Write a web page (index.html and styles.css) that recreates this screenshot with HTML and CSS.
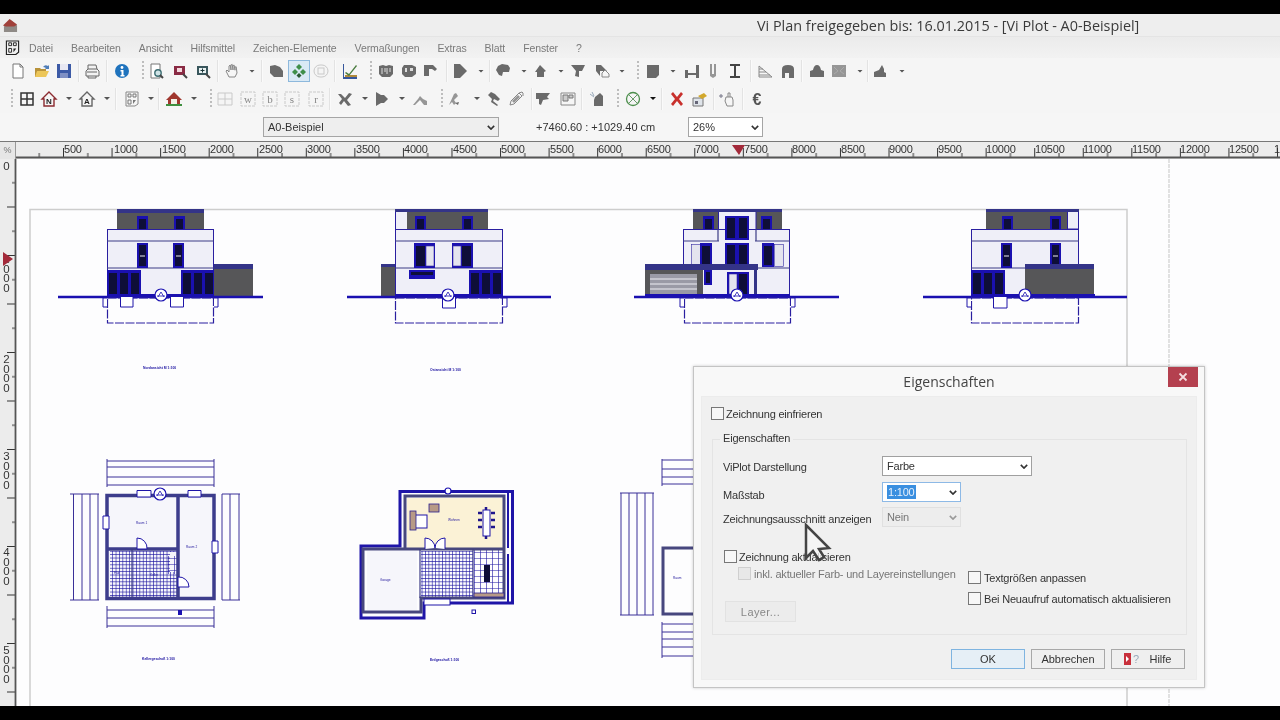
FILE: index.html
```html
<!DOCTYPE html>
<html lang="de">
<head>
<meta charset="utf-8">
<title>Vi Plan</title>
<link rel="stylesheet" href="styles.css">
</head>
<body>
<svg class="defs" aria-hidden="true">
  <defs>
    <g id="doc"><path class="pg" d="M3 1h7l3 3v11H3z"/><path class="pgl" d="M10 1v3h3"/></g>
    <g id="open"><path d="M1 14V5h5l1 1h5v8z" fill="#b8923a"/><path d="M3 8h12l-3 6H1z" fill="#ecc659"/><path d="M9 4q2-3 5-1l1-1v4h-4l1-1q-2-1-3-1z" fill="#4f7db8"/></g>
    <g id="save"><path d="M1 1h14v14H1z" fill="#3c5aa6"/><path d="M4 1h8v6H4z" fill="#e8e8f2"/><path d="M4 10h8v5H4z" fill="#7f90c4"/></g>
    <g id="print"><path class="ol" d="M4 6V2h8l1 4M2 13V8l2-2h9l2 2v5zM4 13v2h8v-2M3 9h10"/></g>
    <g id="info"><circle cx="8" cy="8" r="7" fill="#1f73bd"/><circle cx="8" cy="4.5" r="1.4" fill="#fff"/><path d="M6.5 7h3v5h1v1.4h-4V12h1V8.400h-1z" fill="#fff"/></g>
    <g id="prev"><path class="pg" d="M2 1h9v14H2z"/><circle cx="9" cy="10" r="3.200" fill="#cfe3e6" stroke="#3c6d72" stroke-width="1.400"/><path class="dk2" d="M11 12l3 3"/></g>
    <g id="zr"><path d="M2 3h11v9H2z" fill="#8a2b44"/><path d="M5 5h5v4H5z" fill="#f3d8dd"/><path class="dk2" d="M11 11l4 4"/></g>
    <g id="zp"><path d="M2 3h11v9H2z" fill="#39565c"/><path d="M4 5h7v5H4z" fill="#e8f1f2"/><path d="M7.500 5.500v4M5.500 7.500h4" stroke="#1a3438" fill="none"/><path class="dk2" d="M11 11l4 4"/></g>
    <g id="hand"><path class="olf" d="M5 14L2 8l1-1 2 2V3l1.200-1L7 7V2l1.200-.6L9 7V2.500l1.200-.3.800 5V4l1.200-.2L13 10l-2 4z"/></g>
    <g id="blob"><path class="gr" d="M2 3l5-1 5 2 3 4v6H6l-4-4z"/></g>
    <g id="act"><path d="M8 1l3 3-3 3-3-3z" fill="#3f8f4a"/><path d="M4 6l3 3-3 3-3-3z" fill="#3f8f4a"/><path d="M12 6l3 3-3 3-3-3z" fill="#3f8f4a"/><path d="M8 10l2.500 2.500L8 15l-2.500-2.500z" fill="#2b5a34"/></g>
    <g id="ghost"><rect class="fa" x="1" y="2" width="14" height="12" rx="6"/><rect class="fa" x="5" y="5" width="6" height="6"/></g>
    <g id="chart"><path d="M2 1v13h13v2H1V1z" fill="#37579c"/><path d="M3 12h12v2H3z" fill="#b08a3c"/><path d="M4 9l3 2 7-9 1 1-8 10-4-3z" fill="#4a7c3f"/></g>
    <g id="rf1"><path class="gr" d="M1 3l4-1 3 1 3-1 4 1v8l-3 3H4l-3-3z"/><path d="M4 5v6M7 5v4M9 5v6M12 5v4" stroke="#ddd" fill="none"/></g>
    <g id="rf2"><path class="gr" d="M3 2h8l4 2v7l-4 3H4l-3-3V5z"/><path d="M4 5h2v4H4zM9 5h3v3H9z" fill="#ddd"/></g>
    <g id="rf3"><path class="gr" d="M2 2h9l4 4-2 2-3-2H7v7H2z"/></g>
    <g id="wedge"><path class="gr" d="M2 1h6l7 7-7 7H2z"/></g>
    <g id="helm"><path class="gr" d="M3 3l4-2 6 1 2 3-1 4H8l-1 4-3-1-3-5z"/></g>
    <g id="hut"><path class="gr" d="M8 2l6 6-2 1v5H5V9H3z"/></g>
    <g id="wing"><path class="gr" d="M1 2h14l-3 6H9v6l-4-1 1-5z"/></g>
    <g id="mix"><path class="gr" d="M2 8V2h5l6 6H6v5z"/><path class="olf" d="M8 10l3-3 4 4v3H8z"/></g>
    <g id="sq"><path class="gr" d="M2 2h12v10l-3 3H2z"/></g>
    <g id="tee"><path class="gr" d="M1 7h3v3h8V2h3v13h-3v-3H4v3H1z"/></g>
    <g id="uu"><path class="gm" d="M5 1h2v10h2V1h2v12l-3 2-3-2z"/></g>
    <g id="ibar"><path class="dk2" d="M3 2h10M3 14h10M8 2v12"/></g>
    <g id="ramp"><path class="olf" d="M2 14h13L2 3zM2 6h4M2 9h7M2 12h11"/></g>
    <g id="arch"><path class="gr" d="M2 15V6q0-4 6-4t6 4v9H9v-5H5v5z"/></g>
    <g id="dome"><path class="gr" d="M1 14V8l3-1q1-5 4-5t4 5l3 1v6z"/></g>
    <g id="boxx"><path class="gm" d="M1 2h14v12H1z"/><path d="M3 4l4 4-4 3M13 4l-4 4 4 3" stroke="#aaa" fill="none"/></g>
    <g id="peak"><path class="gr" d="M2 14V9l5-2 3-5 2 4v3l2 1v4z"/></g>
    <g id="cross"><path class="dk3" d="M2 2h12v12H2zM8 2v12M2 8h12"/></g>
    <g id="hn"><path d="M8 1L1 8h2v7h10V8h2z" fill="none" stroke="#8c2b30" stroke-width="1.400"/><text class="ict" x="8" y="13" text-anchor="middle">N</text></g>
    <g id="ha"><path d="M8 1L1 8h2v7h10V8h2z" fill="none" stroke="#666" stroke-width="1.400"/><text class="ict" x="8" y="13" text-anchor="middle">A</text></g>
    <g id="fp"><path class="olf" d="M2 1h12v12l-3 2H2z"/><path d="M4 3h3v3H4zM9 3h3v3H9zM4 9h3v4H4z" fill="none" stroke="#777"/><path d="M9 9h3l-3 4z" fill="#777"/></g>
    <g id="fpd"><path class="dkl" d="M1.500 1h13v12l-3 2.500H1.500z"/><path d="M4 3h3v3H4zM9 3h3v3H9zM4 9h3v4H4z" fill="none" stroke="#222"/><path d="M9 9h3l-3 4z" fill="#222"/></g>
    <g id="hg"><path d="M8 1L0 9h2v4h12V9h2z" fill="#a0372e"/><path d="M5 8h6v5H5z" fill="#f3f1e6"/><path d="M0 13h16v2H0z" fill="#3f8f3f"/></g>
    <g id="fc"><path class="fa" d="M1 2h14v12H1zM8 2v12M1 8h14"/></g>
    <g id="lw"><rect class="fa dsh" x="1" y="1" width="14" height="14"/><text class="icl" x="8" y="12" text-anchor="middle">w</text></g>
    <g id="lb"><rect class="fa dsh" x="1" y="1" width="14" height="14"/><text class="icl" x="8" y="12" text-anchor="middle">b</text></g>
    <g id="ls"><rect class="fa dsh" x="1" y="1" width="14" height="14"/><text class="icl" x="8" y="12" text-anchor="middle">s</text></g>
    <g id="lr"><rect class="fa dsh" x="1" y="1" width="14" height="14"/><text class="icl" x="8" y="12" text-anchor="middle">r</text></g>
    <g id="ham"><path class="gr" d="M1 3h3l4 4 4-5 3 1-5 6 4 5-3 1-4-5-3 4-2-2 3-4z"/></g>
    <g id="wd"><path class="gr" d="M3 1l5 3h3l4 4-4 4H8l-5 3z"/></g>
    <g id="mnd"><path class="gm" d="M1 14l5-6 2-3 3 3 4 2v4z"/><path d="M3 14l5-5 4 5" fill="#f8f8f8"/></g>
    <g id="pick"><path class="gm" d="M2 14L7 3l2-1 2 3-4 4 2 3-2 2-2-3z"/><path d="M11 14l-3-2 4-1z" class="gr"/></g>
    <g id="tool"><path class="gr" d="M2 4l3-3 4 2 5 5-2 2-4-2-1 2 5 4-1 1-6-4 1-3z"/></g>
    <g id="pen"><path class="olf" d="M2 14l1-4 8-8 3 3-8 8zM11 2l3-1 1 1v3"/><path class="gm" d="M4 10l6-6 2 2-6 6z"/></g>
    <g id="flag"><path class="gr" d="M1 2h14l-3 4 2 2-6 1-2 5-2-1V8H1z"/></g>
    <g id="fr"><path class="olf" d="M1 2h14v12H1z"/><path d="M3 4h5v6H3zM9 4h4v3H9z" fill="#ccc" stroke="#777"/></g>
    <g id="sph"><path class="gr" d="M6 6l5-4 3 3v10H5V9z"/><path d="M1 3l4 3M3 1l2 4" stroke="#9ab" fill="none"/></g>
    <g id="ok"><circle cx="8" cy="8" r="6.500" fill="none" stroke="#4d8f4d" stroke-width="1.300"/><path d="M4 4l8 8M12 4l-8 8" stroke="#6a9a6a" fill="none"/></g>
    <g id="xx"><path d="M2 3l2-2 4 5 4-5 2 2-4 5 4 5-2 2-4-5-4 5-2-2 4-5z" fill="#c8302c"/></g>
    <g id="hat"><path d="M1 7h10v8H1z" fill="#dfe4ea" stroke="#777"/><path d="M6 5l6-3 3 3-5 3z" fill="#d2a82c"/><path d="M3 10h3v3H3z" fill="#667"/></g>
    <g id="spk"><path class="olf" d="M6 6h6l1 3v6H7l-2-5zM8 6V2h2v4"/><path d="M1 3v4M-1 5h4" stroke="#778" fill="none"/></g>
    <g id="eu"><text class="ice" x="8" y="13.500" text-anchor="middle">€</text></g>
  </defs>
</svg>

<div class="app">
  <header class="titlebar">
    <svg class="appicon" viewBox="0 0 16 16"><path d="M1 9l7-7 7 6v7H1z" fill="#8f8a86"/><path d="M0 8l7-7 8 6-3 2H3z" fill="#a0403a"/></svg>
    <span class="title">Vi Plan freigegeben bis: 16.01.2015 - [Vi Plot - A0-Beispiel]</span>
  </header>

  <nav class="menubar">
    <svg class="menuicon" viewBox="0 0 16 16"><use href="#fpd"/></svg>
    <span>Datei</span><span>Bearbeiten</span><span>Ansicht</span><span>Hilfsmittel</span><span>Zeichen-Elemente</span><span>Vermaßungen</span><span>Extras</span><span>Blatt</span><span>Fenster</span><span>?</span>
  </nav>

  <div class="toolbar tb1">
    <svg class="ic" viewBox="0 0 16 16"><use href="#doc"/></svg>
    <svg class="ic m8" viewBox="0 0 16 16"><use href="#open"/></svg>
    <svg class="ic m6" viewBox="0 0 16 16"><use href="#save"/></svg>
    <i class="sep m6"></i>
    <svg class="ic m4" viewBox="0 0 16 16"><use href="#print"/></svg>
    <i class="sep m6"></i>
    <svg class="ic m6" viewBox="0 0 16 16"><use href="#info"/></svg>
    <i class="grip m12"></i>
    <svg class="ic m5" viewBox="0 0 16 16"><use href="#prev"/></svg>
    <svg class="ic m7" viewBox="0 0 16 16"><use href="#zr"/></svg>
    <svg class="ic m7" viewBox="0 0 16 16"><use href="#zp"/></svg>
    <i class="sep m6"></i>
    <svg class="ic m5" viewBox="0 0 16 16"><use href="#hand"/></svg>
    <i class="ar m9"></i>
    <i class="sep m6"></i>
    <svg class="ic m5" viewBox="0 0 16 16"><use href="#blob"/></svg>
    <svg class="ic act m4" viewBox="0 0 16 16"><use href="#act"/></svg>
    <svg class="ic m3" viewBox="0 0 16 16"><use href="#ghost"/></svg>
    <i class="sep m5"></i>
    <svg class="ic m6" viewBox="0 0 16 16"><use href="#chart"/></svg>
    <i class="grip m12"></i>
    <svg class="ic m6" viewBox="0 0 16 16"><use href="#rf1"/></svg>
    <svg class="ic m7" viewBox="0 0 16 16"><use href="#rf2"/></svg>
    <svg class="ic m5" viewBox="0 0 16 16"><use href="#rf3"/></svg>
    <i class="sep m8"></i>
    <svg class="ic m4" viewBox="0 0 16 16"><use href="#wedge"/></svg>
    <i class="ar m10"></i>
    <i class="sep m5"></i>
    <svg class="ic m4" viewBox="0 0 16 16"><use href="#helm"/></svg>
    <i class="ar m10"></i>
    <svg class="ic m5" viewBox="0 0 16 16"><use href="#hut"/></svg>
    <i class="ar m10"></i>
    <svg class="ic m6" viewBox="0 0 16 16"><use href="#wing"/></svg>
    <svg class="ic m8" viewBox="0 0 16 16"><use href="#mix"/></svg>
    <i class="ar m9"></i>
    <i class="grip m12"></i>
    <svg class="ic m6" viewBox="0 0 16 16"><use href="#sq"/></svg>
    <i class="ar m9"></i>
    <svg class="ic m8" viewBox="0 0 16 16"><use href="#tee"/></svg>
    <svg class="ic m5" viewBox="0 0 16 16"><use href="#uu"/></svg>
    <svg class="ic m6" viewBox="0 0 16 16"><use href="#ibar"/></svg>
    <i class="sep m7"></i>
    <svg class="ic m5" viewBox="0 0 16 16"><use href="#ramp"/></svg>
    <svg class="ic m7" viewBox="0 0 16 16"><use href="#arch"/></svg>
    <i class="sep m5"></i>
    <svg class="ic m6" viewBox="0 0 16 16"><use href="#dome"/></svg>
    <svg class="ic m6" viewBox="0 0 16 16"><use href="#boxx"/></svg>
    <i class="ar m10"></i>
    <i class="sep m4"></i>
    <svg class="ic m3" viewBox="0 0 16 16"><use href="#peak"/></svg>
    <i class="ar m11"></i>
  </div>

  <div class="toolbar tb2">
    <i class="grip m1"></i>
    <svg class="ic m6" viewBox="0 0 16 16"><use href="#cross"/></svg>
    <svg class="ic m6" viewBox="0 0 16 16"><use href="#hn"/></svg>
    <i class="ar m9"></i>
    <svg class="ic m7" viewBox="0 0 16 16"><use href="#ha"/></svg>
    <i class="ar m9"></i>
    <i class="sep m5"></i>
    <svg class="ic m7" viewBox="0 0 16 16"><use href="#fp"/></svg>
    <i class="ar m8"></i>
    <i class="sep m4"></i>
    <svg class="ic m6" viewBox="0 0 16 16"><use href="#hg"/></svg>
    <i class="ar m9"></i>
    <i class="grip m13"></i>
    <svg class="ic m5" viewBox="0 0 16 16"><use href="#fc"/></svg>
    <svg class="ic m7" viewBox="0 0 16 16"><use href="#lw"/></svg>
    <svg class="ic m6" viewBox="0 0 16 16"><use href="#lb"/></svg>
    <svg class="ic m6" viewBox="0 0 16 16"><use href="#ls"/></svg>
    <svg class="ic m8" viewBox="0 0 16 16"><use href="#lr"/></svg>
    <i class="sep m5"></i>
    <svg class="ic m6" viewBox="0 0 16 16"><use href="#ham"/></svg>
    <i class="ar m9"></i>
    <svg class="ic m5" viewBox="0 0 16 16"><use href="#wd"/></svg>
    <i class="ar m10"></i>
    <svg class="ic m7" viewBox="0 0 16 16"><use href="#mnd"/></svg>
    <i class="grip m13"></i>
    <svg class="ic m4" viewBox="0 0 16 16"><use href="#pick"/></svg>
    <i class="ar m11"></i>
    <svg class="ic m6" viewBox="0 0 16 16"><use href="#tool"/></svg>
    <svg class="ic m6" viewBox="0 0 16 16"><use href="#pen"/></svg>
    <i class="sep m7"></i>
    <svg class="ic m2" viewBox="0 0 16 16"><use href="#flag"/></svg>
    <svg class="ic m9" viewBox="0 0 16 16"><use href="#fr"/></svg>
    <i class="sep m5"></i>
    <svg class="ic m6" viewBox="0 0 16 16"><use href="#sph"/></svg>
    <i class="grip m12"></i>
    <svg class="ic m6" viewBox="0 0 16 16"><use href="#ok"/></svg>
    <i class="ar m9 ardk"></i>
    <i class="sep m5"></i>
    <svg class="ic m6" viewBox="0 0 16 16"><use href="#xx"/></svg>
    <svg class="ic m7" viewBox="0 0 16 16"><use href="#hat"/></svg>
    <i class="sep m5"></i>
    <svg class="ic m5" viewBox="0 0 16 16"><use href="#spk"/></svg>
    <i class="sep m6"></i>
    <svg class="ic m5" viewBox="0 0 16 16"><use href="#eu"/></svg>
  </div>

  <div class="statusrow">
    <div class="combo sheetcombo"><span>A0-Beispiel</span><svg class="chev" viewBox="0 0 10 6"><path d="M1 1l4 4 4-4"/></svg></div>
    <span class="coords">+7460.60 : +1029.40 cm</span>
    <div class="combo zoomcombo"><span>26%</span><svg class="chev" viewBox="0 0 10 6"><path d="M1 1l4 4 4-4"/></svg></div>
  </div>

  <div class="hruler">
    <div class="corner">%</div>
    <svg class="hr" viewBox="16 141 1264 18">
      <defs>
        <pattern id="htick" patternUnits="userSpaceOnUse" x="63" y="141" width="48.56" height="18">
          <path class="tk" d="M.5 7v10M24.800 12v5"/>
        </pattern>
      </defs>
      <rect x="16" y="141" width="1264" height="18" fill="url(#htick)"/>
      <path class="rl" d="M16 157.500h1264"/>
      <text class="rt" x="64" y="153">500</text><text class="rt" x="114" y="153">1000</text><text class="rt" x="162" y="153">1500</text><text class="rt" x="210" y="153">2000</text><text class="rt" x="259" y="153">2500</text><text class="rt" x="307" y="153">3000</text><text class="rt" x="356" y="153">3500</text><text class="rt" x="404" y="153">4000</text><text class="rt" x="453" y="153">4500</text><text class="rt" x="501" y="153">5000</text><text class="rt" x="550" y="153">5500</text><text class="rt" x="598" y="153">6000</text><text class="rt" x="647" y="153">6500</text><text class="rt" x="695" y="153">7000</text><text class="rt" x="744" y="153">7500</text><text class="rt" x="792" y="153">8000</text><text class="rt" x="841" y="153">8500</text><text class="rt" x="889" y="153">9000</text><text class="rt" x="938" y="153">9500</text><text class="rt" x="986" y="153">10000</text><text class="rt" x="1035" y="153">10500</text><text class="rt" x="1083" y="153">11000</text><text class="rt" x="1132" y="153">11500</text><text class="rt" x="1180" y="153">12000</text><text class="rt" x="1229" y="153">12500</text><text class="rt" x="1274" y="153">1</text>
      <path class="marker" d="M732 145h13l-6 10z"/>
    </svg>
  </div>

  <main class="workspace">
    <svg class="vr" viewBox="0 159 17 547">
      <defs>
        <pattern id="vtick" patternUnits="userSpaceOnUse" x="0" y="158" width="17" height="48.5">
          <path class="tk" d="M7 .5h8M12 24.700h3"/>
        </pattern>
      </defs>
      <rect x="0" y="159" width="15" height="547" fill="url(#vtick)"/>
      <path class="rl" d="M15.500 159v547"/>
      <text class="vt" x="6.500" y="160">0</text>
      <text class="vt" x="6.500" y="253">1000</text>
      <text class="vt" x="6.500" y="353">2000</text>
      <text class="vt" x="6.500" y="450">3000</text>
      <text class="vt" x="6.500" y="546">4000</text>
      <text class="vt" x="6.500" y="644">5000</text>
      <path class="marker" d="M3 252l10 7-10 7z"/>
    </svg>

    <svg class="sheet" viewBox="17 159 1263 547">
      <defs>
        <pattern id="tile" patternUnits="userSpaceOnUse" width="3.400" height="3.400">
          <path d="M0 0h3.400M0 0v3.400" stroke="#1c14a0" stroke-width="1.200" fill="none"/>
        </pattern>
        <pattern id="tile2" patternUnits="userSpaceOnUse" width="6" height="6">
          <path d="M0 0h6M0 0v6" stroke="#1c14a0" stroke-width="1.200" fill="none"/>
        </pattern>
        <g id="w1"><rect class="nv" width="11" height="13"/><rect class="bk" x="2" y="3" width="7" height="10"/></g>
        <g id="w2"><rect class="nv" width="11" height="25"/><rect class="bk" x="2" y="2" width="7" height="21"/><path class="st" d="M3 13h5"/></g>
        <g id="w3"><rect class="nv" width="34" height="27"/><rect class="bk" x="2" y="3" width="8" height="23"/><rect class="bk" x="13" y="3" width="8" height="23"/><rect class="bk" x="24" y="3" width="8" height="23"/></g>
        <g id="ci"><circle class="cir" r="6"/><path class="ln1" d="M-3 2L0-3l3 5M-4 1h8"/></g>
      </defs>

      <path class="paper" d="M30 706V209.500h1097V706"/>
      <path class="guide" d="M1169 159v547"/>

      <!-- Ansicht 1 -->
      <g>
        <rect class="dk" x="117" y="209" width="87" height="20"/><rect class="band" x="117" y="209" width="87" height="4"/>
        <use href="#w1" x="137" y="216"/><use href="#w1" x="174" y="216"/>
        <rect class="lt" x="107.500" y="229.500" width="106" height="67"/>
        <path class="ln" d="M107 241h107M107 268h107"/>
        <use href="#w2" x="137" y="243"/><use href="#w2" x="173" y="243"/>
        <use href="#w3" x="107" y="270"/><use href="#w3" x="181" y="270"/>
        <rect class="dk" x="214" y="264" width="39" height="33"/><rect class="band" x="214" y="264" width="39" height="5"/>
        <path class="gl" d="M58 297h205"/><path class="gl2" d="M107 296h107"/>
        <rect class="da" x="107.500" y="298" width="106" height="25"/>
        <path class="wh" d="M120.500 297v10h12.500v-10M170.500 297v10h13v-10M107 298h-4v9h4M214 298h4v9h-4"/>
        <use href="#ci" x="161" y="295"/>
        <text class="cap" x="143" y="368.500">Nordansicht M 1:100</text>
      </g>
      <!-- Ansicht 2 -->
      <g>
        <rect class="lt" x="395.500" y="209.500" width="12" height="20"/><rect class="dk" x="407" y="209" width="81" height="20"/><rect class="band" x="395" y="209" width="93" height="3"/>
        <use href="#w1" x="415" y="216"/><use href="#w1" x="462" y="216"/>
        <rect class="lt" x="395.500" y="229.500" width="107" height="67"/>
        <path class="ln" d="M395 241h108M395 268h108"/>
        <rect class="nv" x="414" y="243" width="21" height="25"/><rect class="bk" x="416" y="246" width="9" height="20"/><rect class="pn" x="426" y="246" width="8" height="20"/>
        <rect class="nv" x="452" y="243" width="21" height="25"/><rect class="bk" x="462" y="246" width="9" height="20"/><rect class="pn" x="453" y="246" width="8" height="20"/>
        <rect class="nv" x="409" y="270" width="26" height="9"/><rect class="bk" x="411" y="272" width="22" height="3"/>
        <use href="#w3" x="469" y="270"/>
        <rect class="dk" x="381" y="264" width="14" height="33"/><rect class="band" x="381" y="264" width="14" height="3"/>
        <path class="gl" d="M347 297h204"/><path class="gl2" d="M395 296h108"/>
        <rect class="da" x="395.500" y="298" width="107" height="25"/>
        <path class="wh" d="M442.500 297v11h13v-11M503 298h4v9h-4"/>
        <use href="#ci" x="448" y="295"/>
        <text class="cap" x="430" y="371">Ostansicht M 1:100</text>
      </g>
      <!-- Ansicht 3 -->
      <g>
        <rect class="dk" x="693" y="209" width="25" height="20"/><rect class="dk" x="756" y="209" width="26" height="20"/><rect class="lt" x="718.500" y="210.500" width="37.500" height="19"/><rect class="band" x="693" y="209" width="89" height="3"/>
        <use href="#w1" x="703" y="216"/><use href="#w1" x="761" y="216"/>
        <rect class="lt" x="683.500" y="229.500" width="106" height="67"/>
        <path class="ln" d="M683 241h36M755 241h35M757 268h33M718 229v12M756 229v12"/>
        <rect class="nv" x="725" y="216" width="12" height="24"/><rect class="bk" x="727" y="218" width="8" height="20"/><rect class="nv" x="737" y="216" width="12" height="24"/><rect class="bk" x="739" y="218" width="8" height="20"/>
        <rect class="nv" x="725" y="243" width="12" height="23"/><rect class="bk" x="727" y="245" width="8" height="19"/><rect class="nv" x="737" y="243" width="12" height="23"/><rect class="bk" x="739" y="245" width="8" height="19"/>
        <rect class="pn" x="691.500" y="244.500" width="9" height="22"/><rect class="nv" x="700" y="243" width="12" height="24"/><rect class="bk" x="702" y="246" width="8" height="19"/>
        <rect class="pn" x="774.500" y="244.500" width="9" height="22"/><rect class="nv" x="762" y="243" width="12" height="24"/><rect class="bk" x="764" y="246" width="8" height="19"/>
        <rect class="band" x="645" y="264" width="113" height="6"/>
        <rect class="dk" x="645" y="270" width="58" height="27"/>
        <rect class="dr" x="650" y="274" width="47" height="21"/>
        <path class="st" d="M650 279h47M650 284h47M650 289h47"/>
        <rect class="nv" x="704" y="270" width="8" height="15"/><rect class="bk" x="706" y="272" width="4" height="11"/>
        <rect class="nv" x="727" y="272" width="22" height="24"/><rect class="pn" x="729" y="274" width="8" height="20"/><rect class="bk" x="739" y="274" width="8" height="20"/>
        <rect class="band" x="754" y="270" width="3" height="27"/>
        <path class="gl" d="M634 297h205"/><path class="gl2" d="M645 296h145"/>
        <rect class="da" x="684.500" y="298" width="106" height="25"/>
        <path class="wh" d="M684 298h-4v9h4M791 298h4v9h-4"/>
        <use href="#ci" x="737" y="295"/>
      </g>
      <!-- Ansicht 4 -->
      <g>
        <rect class="dk" x="986" y="209" width="81" height="20"/><rect class="lt" x="1067.500" y="210" width="11" height="19"/><rect class="band" x="986" y="209" width="93" height="3"/>
        <use href="#w1" x="1002" y="216"/><use href="#w1" x="1050" y="216"/>
        <rect class="lt" x="971.500" y="229.500" width="107" height="67"/>
        <path class="ln" d="M971 241h108M971 268h54"/>
        <use href="#w2" x="1001" y="243"/><use href="#w2" x="1050" y="243"/>
        <use href="#w3" x="971" y="270"/>
        <rect class="dk" x="1025" y="264" width="69" height="32"/><rect class="band" x="1025" y="264" width="69" height="5"/>
        <path class="gl" d="M923 297h204"/><path class="gl2" d="M971 296h124"/>
        <rect class="da" x="971.500" y="298" width="107" height="25"/>
        <path class="wh" d="M993.500 297v11h13.500v-11M971 298h-4v9h4"/>
        <use href="#ci" x="1025" y="295"/>
      </g>

      <!-- Kellergeschoss -->
      <g>
        <path class="dim" d="M107 461h107M107 467h107M107 477h107M107 485h107M107 459v28M214 459v28"/>
        <path class="dim" d="M107 610h107M107 618h107M107 626h107M107 606v22M214 606v22"/>
        <path class="dim" d="M73.500 494v106M82 494v106M90 494v106M98 494v106M70 494h29M70 600h29"/>
        <path class="dim" d="M222 494v106M230 494v106M239 494v106M222 494h18M222 600h18"/>
        <rect class="lt2" x="108.500" y="496.500" width="104" height="102"/>
        <rect x="110" y="551" width="68" height="46" fill="url(#tile)"/>
        <rect class="lt2" x="170" y="552" width="8" height="20"/>
        <rect x="168" y="556" width="10" height="18" fill="url(#tile2)"/>
        <path class="wall" d="M107 495.500h107v103H107zM178 495v103M107 549h71"/>
        <path class="ln" d="M132 549v48"/>
        <path class="wh" d="M137 549v-11a10 10 0 0 1 10 11zM178 577v10h11a10 10 0 0 0-11-10z"/>
        <path class="wh" d="M137 490.500h14v6.500h-14zM188 490.500h13v6.500h-13zM103 516h6v13h-6zM212 541h6v12h-6z"/>
        <use href="#ci" x="160" y="494"/>
        <text class="rm" x="136" y="524">Raum 1</text><text class="rm" x="186" y="548">Raum 2</text><text class="rm" x="114" y="574">Flur</text>
        <text class="rm" x="150" y="576">Keller</text>
        <rect class="nv" x="178" y="610" width="4" height="5"/>
        <text class="cap" x="142" y="659.500">Kellergeschoß 1:100</text>
      </g>

      <!-- Erdgeschoss -->
      <g>
        <path class="wallb" d="M400 491.500h112.500V603H424v15H361V546h39z"/>
        <rect class="cream" x="407" y="498" width="98" height="51"/>
        <rect x="421" y="551" width="52" height="47" fill="url(#tile)"/>
        <rect x="474" y="549" width="31" height="49" fill="url(#tile2)"/>
        <rect class="lt2" x="367" y="551" width="50" height="59"/>
        <path class="wall2" d="M405 496h99v102h-83v14h-58v-63h42zM405 549h99"/>
        <path class="ln" d="M420 549v49M473 549v49"/>
        <path class="gl3" d="M508 491v57M508 554v50"/>
        <rect class="wh" x="424" y="599" width="26" height="6"/>
        <path class="wh" d="M425 549v-11a10 10 0 0 1 10 10M445 549v-11a10 10 0 0 0-10 10"/>
        <rect class="wh" x="413" y="515" width="14" height="13"/>
        <rect class="bru" x="410" y="511" width="6" height="19"/>
        <rect class="bru" x="429" y="504" width="10" height="8"/>
        <rect class="wh" x="483" y="510" width="7" height="26"/>
        <path class="tb" d="M478 513h4M478 520h4M478 527h4M491 513h4M491 520h4M491 527h4M486 507v3M486 536v3"/>
        <rect class="bk" x="484" y="565" width="6" height="17"/>
        <rect class="bru" x="474" y="593" width="30" height="4"/>
        <circle class="cir" cx="448" cy="491" r="3"/>
        <rect class="wh" x="472" y="610" width="3.500" height="3.500"/>
        <text class="rm" x="448" y="521">Wohnen</text><text class="rm" x="380" y="581">Garage</text>
        <text class="cap" x="430" y="660.500">Erdgeschoß 1:100</text>
      </g>

      <!-- Obergeschoss -->
      <g>
        <path class="dim" d="M662 460h31M662 469h31M662 477h31M662 484h31M662 459v27"/>
        <path class="dim" d="M621 493v122M629 493v122M637 493v122M645 493v122M653 493v122M620 493h34M620 615h34"/>
        <path class="dim" d="M662 624h31M662 632h31M662 639h31M662 647h31M662 656h31M662 622v36"/>
        <path class="wall2" d="M693 548h-30v66h30"/>
        <text class="rm" x="673" y="579">Raum</text>
      </g>
    </svg>
  </main>
</div>

<section class="dialog">
  <div class="dlg-head">
    <span class="dlg-title">Eigenschaften</span>
    <button class="dlg-close"><svg viewBox="0 0 10 10"><path d="M1.500 1.500l7 7M8.500 1.500l-7 7"/></svg></button>
  </div>
  <div class="dlg-body">
    <label class="chk first"><i class="box"></i><span>Zeichnung einfrieren</span></label>
    <div class="group">
      <div class="legend">Eigenschaften</div>
      <div class="row r1"><span class="lbl">ViPlot Darstellung</span><div class="sel w150"><span>Farbe</span><svg class="chev" viewBox="0 0 10 6"><path d="M1 1l4 4 4-4"/></svg></div></div>
      <div class="row r2"><span class="lbl">Maßstab</span><div class="sel w79 focus"><span class="picked">1:100</span><svg class="chev" viewBox="0 0 10 6"><path d="M1 1l4 4 4-4"/></svg></div></div>
      <div class="row r3"><span class="lbl">Zeichnungsausschnitt anzeigen</span><div class="sel w79 off"><span>Nein</span><svg class="chev" viewBox="0 0 10 6"><path d="M1 1l4 4 4-4"/></svg></div></div>
      <div class="lower">
        <div class="lower-l">
          <label class="chk"><i class="box"></i><span>Zeichnung aktualisieren</span></label>
          <label class="chk sub off"><i class="box"></i><span>inkl. aktueller Farb- und Layereinstellungen</span></label>
          <button class="btn layer">Layer...</button>
        </div>
        <div class="lower-r">
          <label class="chk"><i class="box"></i><span>Textgrößen anpassen</span></label>
          <label class="chk"><i class="box"></i><span>Bei Neuaufruf automatisch aktualisieren</span></label>
        </div>
      </div>
    </div>
    <div class="dlg-foot">
      <button class="btn def">OK</button>
      <button class="btn">Abbrechen</button>
      <button class="btn help"><svg viewBox="0 0 16 14"><path d="M0 1h7v12H0z" fill="#c8303c"/><path d="M2 4l3 3-3 3z" fill="#fff"/><text class="q" x="9" y="11">?</text></svg><span>Hilfe</span></button>
    </div>
  </div>
</section>

<svg class="cursor" viewBox="0 0 32 40"><path d="M3 3v33l7-7 6 9 5-3-5-8 10-1z"/></svg>
</body>
</html>
```

FILE: styles.css
```css
* { box-sizing: border-box; }
html, body { margin: 0; height: 720px; overflow: hidden; background: #000; }
body { position: relative; font-family: "Liberation Sans", Arial, sans-serif; filter: blur(.5px); }
.defs { position: absolute; width: 0; height: 0; }

.app { margin-top: 14px; height: 692px; display: flex; flex-direction: column; background: #f6f6f6; overflow: hidden; }

/* title + menu */
.titlebar { height: 22px; flex: none; display: flex; align-items: center; background: #eeeeee; padding-left: 3px; }
.appicon { width: 15px; height: 15px; flex: none; }
.title { margin-left: 739px; font: 14.4px "Open Sans", sans-serif; color: #3a3a3a; white-space: nowrap; }
.menubar { height: 22px; flex: none; display: flex; align-items: center; gap: 18px; background: linear-gradient(#ebebeb, #f2f2f2); font-size: 10.500px; letter-spacing: -.1px; color: #7a7a7a; padding-left: 5px; border-top: 1px solid #e4e4e4; }
.menuicon { width: 15px; height: 15px; margin-right: -9px; flex: none; }

/* toolbars */
.toolbar { display: flex; align-items: center; padding-left: 10px; flex: none; background: #f5f5f5; }
.tb1 { height: 26px; }
.tb2 { height: 29px; }
.ic { width: 16px; height: 16px; flex: none; overflow: visible; }
.act { width: 22px; height: 22px; padding: 2px; border: 1px solid #8db8dc; background: #d9e9f5; box-sizing: border-box; }
.sep { width: 2px; height: 22px; flex: none; background: #e3e3e3; border-right: 1px solid #fafafa; }
.grip { width: 2px; height: 20px; flex: none; background-image: linear-gradient(#bdbdbd 50%, transparent 50%); background-size: 2px 4px; }
.ar { width: 6px; height: 3px; flex: none; background: #555; clip-path: polygon(0 0, 100% 0, 50% 100%); }
.ardk { background: #111; }

.m1 { margin-left: 1px; } .m2 { margin-left: 2px; } .m3 { margin-left: 3px; } .m4 { margin-left: 4px; }
.m5 { margin-left: 5px; } .m6 { margin-left: 6px; } .m7 { margin-left: 7px; } .m8 { margin-left: 8px; }
.m9 { margin-left: 9px; } .m10 { margin-left: 10px; } .m11 { margin-left: 11px; } .m12 { margin-left: 12px; }
.m13 { margin-left: 13px; }

/* icon parts */
.pg { fill: #fff; stroke: #777; }
.pgl { fill: none; stroke: #777; }
.ol { fill: #f2f2f2; stroke: #666; stroke-width: 1; }
.olf { fill: #f6f6f6; stroke: #888; stroke-width: 1; }
.dkl { fill: #f0f0f0; stroke: #222; stroke-width: 1.200; }
.gr { fill: #6a6a6a; }
.gm { fill: #969696; }
.fa { fill: none; stroke: #c9c9c9; }
.dsh { stroke-dasharray: 3 1; }
.dk2 { fill: none; stroke: #444; stroke-width: 2; }
.dk3 { fill: none; stroke: #333; stroke-width: 1.500; }
.ict { font: bold 8px "Liberation Sans", sans-serif; fill: #222; }
.icl { font: 11px "Liberation Serif", serif; fill: #888; }
.ice { font: bold 16px "Liberation Sans", sans-serif; fill: #555; }

/* status row */
.statusrow { height: 28px; flex: none; display: flex; align-items: center; padding-left: 263px; background: #f6f6f6; font-size: 11px; color: #333; }
.combo { height: 20px; display: flex; align-items: center; justify-content: space-between; padding: 0 3px 0 4px; border: 1px solid #a5a5a5; flex: none; }
.sheetcombo { width: 236px; background: #eeeeee; }
.zoomcombo { width: 75px; background: #fff; margin-left: 32px; }
.coords { margin-left: 37px; width: 120px; white-space: nowrap; }
.chev { width: 8px; height: 5px; fill: none; stroke: #333; stroke-width: 2; flex: none; }

/* rulers */
.hruler { height: 18px; flex: none; display: flex; background: #ececec; border-top: 1px solid #777; }
.corner { width: 16px; flex: none; font-size: 9px; color: #777; text-align: center; line-height: 16px; background: #e6e6e6; border-right: 1px solid #999; }
.hr { width: 1264px; height: 18px; flex: none; margin-top: -1px; }
.tk { stroke: #333; stroke-width: 1; fill: none; }
.rl { stroke: #555; stroke-width: 1.800; fill: none; }
.rt { font: 11px "Liberation Sans", sans-serif; fill: #333; letter-spacing: -.2px; }
.marker { fill: #a32a3a; }
.workspace { flex: 1; display: flex; min-height: 0; background: #fdfdfe; }
.vr { width: 17px; height: 547px; flex: none; background: linear-gradient(90deg, #ececec 15px, #fdfdfe 15px); }
.vt { font: 11.500px "Liberation Sans", sans-serif; fill: #333; writing-mode: vertical-rl; text-orientation: upright; letter-spacing: -2.400px; }
.sheet { width: 1263px; height: 547px; flex: none; }

/* drawing */
.paper { fill: none; stroke: #cdcdcd; stroke-width: 1.500; }
.guide { fill: none; stroke: #c5c5c5; stroke-dasharray: 4 1; }
.dk { fill: #565658; }
.band { fill: #343488; }
.nv { fill: #1a10b0; }
.bk { fill: #0e0e38; }
.lt { fill: #efeff8; stroke: #2a1fa0; stroke-width: 1; }
.lt2 { fill: #f6f6fb; }
.pn { fill: #e4e4ee; stroke: #3328a0; stroke-width: .6; }
.dr { fill: #9a9aa6; }
.st { fill: none; stroke: #eeeef4; stroke-width: 1; }
.ln { fill: none; stroke: #3c3c86; stroke-width: 1.200; }
.ln1 { fill: none; stroke: #1a10b0; stroke-width: .8; }
.gl { fill: none; stroke: #1a10b0; stroke-width: 2.600; }
.gl2 { fill: none; stroke: #1a10b0; stroke-width: 4; }
.gl3 { fill: none; stroke: #1f15a8; stroke-width: 2; }
.da { fill: none; stroke: #2a1fa0; stroke-width: 1.200; stroke-dasharray: 9 1.500; }
.wh { fill: #fff; stroke: #1f15a8; stroke-width: 1; }
.cir { fill: #fff; stroke: #1a10b0; stroke-width: 1.200; }
.cap { font: bold 3.400px "Liberation Sans", sans-serif; fill: #1a10a0; }
.rm { font: 3.200px "Liberation Sans", sans-serif; fill: #2a20a0; }
.dim { fill: none; stroke: #3a3098; stroke-width: 1; }
.wall { fill: none; stroke: #3d3d8c; stroke-width: 3.500; }
.wallb { fill: none; stroke: #1f15a8; stroke-width: 3; }
.wall2 { fill: none; stroke: #47477e; stroke-width: 3; }
.cream { fill: #fbf2d6; }
.bru { fill: #b79a86; stroke: #2a1f90; stroke-width: .8; }
.tb { fill: none; stroke: #1f158c; stroke-width: 2.500; }

/* dialog */
.dialog { position: absolute; left: 693px; top: 366px; width: 512px; height: 322px; display: flex; flex-direction: column; padding: 0 7px 7px; background: #f8f8f8; border: 1px solid #c4c4c4; box-shadow: 0 0 3px rgba(0,0,0,.2); color: #333; font-size: 11px; letter-spacing: -.2px; }
.dlg-head { height: 29px; flex: none; display: flex; justify-content: center; position: relative; padding-top: 5px; }
.dlg-title { font: 14px "Open Sans", sans-serif; letter-spacing: 0; color: #444; }
.dlg-close { position: absolute; right: -1px; top: 0; width: 30px; height: 20px; padding: 0; border: 0; background: #b4404f; display: flex; align-items: center; justify-content: center; }
.dlg-close svg { width: 10px; height: 10px; fill: none; stroke: #f4dde0; stroke-width: 1.800; }
.dlg-body { flex: 1; background: #f0f0f0; padding: 10px 9px 0 10px; border: 1px solid #ececec; display: flex; flex-direction: column; }
.chk { display: flex; align-items: center; height: 13px; white-space: nowrap; }
.first { margin-left: -1px; }
.box { width: 13px; height: 13px; flex: none; background: #f7f7f7; border: 1px solid #777; margin-right: 2px; }
.group { height: 196px; margin-top: 19px; border: 1px solid #e4e4e4; padding: 0 10px; flex: none; }
.legend { margin: -9px 0 0 -3px; height: 17px; line-height: 15px; width: fit-content; padding: 0 3px; background: #f0f0f0; }
.row { display: flex; align-items: center; }
.lbl { width: 159px; flex: none; white-space: nowrap; }
.r1 { margin-top: 8px; }
.r1 .lbl { padding-top: 2px; }
.r2 { margin-top: 6px; }
.r2 .lbl { padding-top: 6px; }
.r3 { margin-top: 5px; }
.r3 .lbl { padding-top: 4px; }
.sel { height: 20px; display: flex; align-items: center; justify-content: space-between; padding: 0 3px 0 4px; background: #fff; border: 1px solid #a0a0a0; }
.w150 { width: 150px; }
.w79 { width: 79px; }
.focus { border-color: #8db9e6; }
.picked { background: #3a8fe0; color: #e6f0fb; padding: 0 1px; line-height: 14px; }
.sel.off { background: #ededed; border-color: #e0e0e0; color: #777; }
.sel.off .chev { stroke: #999; }
.lower { display: flex; margin-top: 23px; }
.lower-l { width: 245px; flex: none; padding-left: 1px; }
.lower-r { margin-top: 21px; display: flex; flex-direction: column; gap: 8px; }
.sub { margin: 4px 0 0 14px; color: #777; white-space: nowrap; }
.sub .box { background: #e8e8e8; border-color: #cfcfcf; margin-right: 3px; }
.lower-r .chk { gap: 1px; }
.btn { height: 20px; width: 74px; padding: 0; font: 11px "Liberation Sans", sans-serif; color: #333; background: #efefef; border: 1px solid #a8a8a8; display: flex; align-items: center; justify-content: center; }
.layer { width: 71px; height: 21px; margin: 21px 0 0 1px; color: #888; background: #ececec; border-color: #e2e2e2; letter-spacing: .4px; }
.dlg-foot { display: flex; justify-content: flex-end; gap: 6px; margin-top: 14px; padding-right: 2px; }
.def { border-color: #7fb4e0; background: #e6eff6; }
.help { gap: 9px; }
.help svg { width: 16px; height: 14px; }
.q { font: 11px "Liberation Sans", sans-serif; fill: #9ab; }
.cursor { position: absolute; left: 803px; top: 522px; width: 32px; height: 40px; }
.cursor path { fill: rgba(245,245,245,.8); stroke: #444; stroke-width: 2.500; }
```
